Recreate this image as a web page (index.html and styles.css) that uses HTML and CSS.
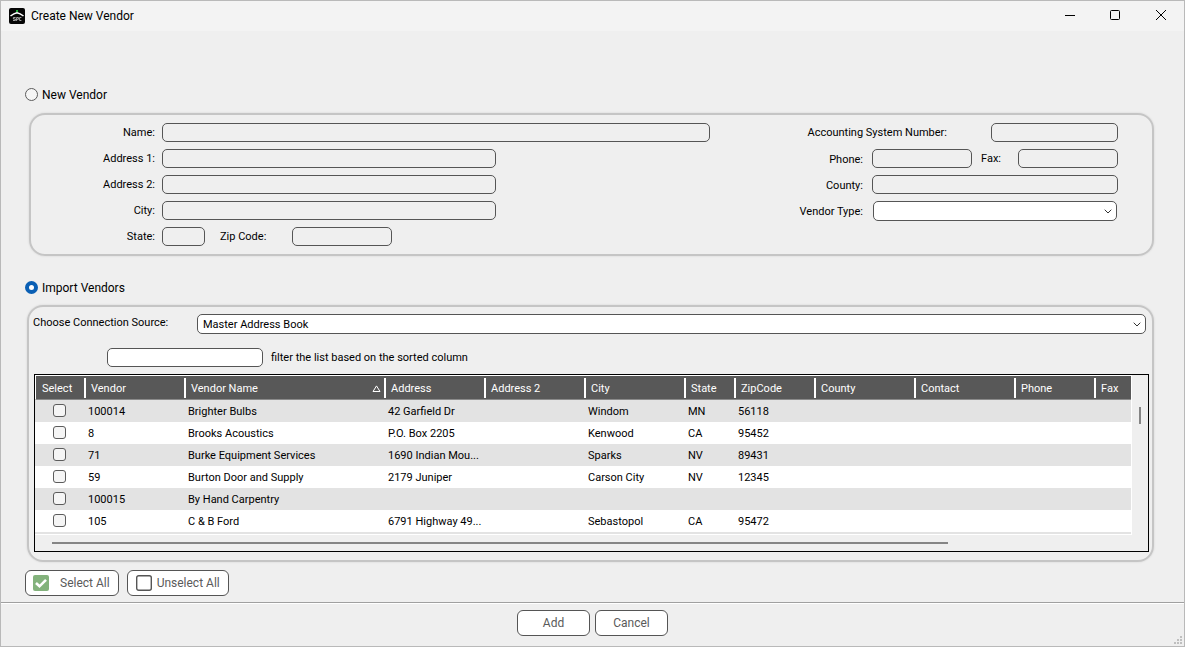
FILE: index.html
```
<!DOCTYPE html>
<html lang="en">
<head>
<meta charset="utf-8">
<title>Create New Vendor</title>
<link rel="stylesheet" href="styles.css">
</head>
<body>
<div class="window">
  <header class="titlebar">
    <svg class="app-icon" width="16" height="16" viewBox="0 0 16 16" aria-hidden="true">
      <rect width="16" height="16" rx="2" fill="#050505"/>
      <rect x="7" y="2" width="2" height="2" fill="#1fae3a"/>
      <path d="M1.5 8 Q5 5.2 8 4.7 Q11 5.2 14.5 8" fill="none" stroke="#fff" stroke-width="1.6"/>
      <path d="M6.6 9.5H4.4V11H6.4V12.5H4 M7.6 13V9.5H9.4V11.3H7.6 M12.4 9.5H10.6V12.5H12.4" fill="none" stroke="#c4c4c4" stroke-width=".8"/>
    </svg>
    <h1 class="title">Create New Vendor</h1>
    <div class="window-controls">
      <button type="button" aria-label="Minimize"><svg width="12" height="12" viewBox="0 0 12 12"><path d="M2 5.5H12" stroke="#000"/></svg></button>
      <button type="button" aria-label="Maximize"><svg width="12" height="12" viewBox="0 0 12 12"><rect x="1.5" y=".5" width="9" height="9" rx="1" fill="none" stroke="#000"/></svg></button>
      <button type="button" aria-label="Close"><svg width="12" height="12" viewBox="0 0 12 12"><path d="M1 0L11 10M11 0L1 10" stroke="#000"/></svg></button>
    </div>
  </header>

  <main class="content">
    <label class="mode"><input type="radio" name="mode">New Vendor</label>
    <section class="panel vendor-panel">
      <div class="form form-left">
        <label for="name">Name:</label><input class="field w-name" id="name" type="text" disabled>
        <label for="addr1">Address 1:</label><input class="field w-address" id="addr1" type="text" disabled>
        <label for="addr2">Address 2:</label><input class="field w-address" id="addr2" type="text" disabled>
        <label for="city">City:</label><input class="field w-address" id="city" type="text" disabled>
        <label for="state">State:</label>
        <div class="inline-fields">
          <input class="field w-state" id="state" type="text" disabled>
          <label class="zip-label" for="zip">Zip Code:</label>
          <input class="field w-short" id="zip" type="text" disabled>
        </div>
      </div>
      <div class="form-right">
        <div class="account-row">
          <label for="account">Accounting System Number:</label><input class="field w-account" id="account" type="text" disabled>
        </div>
        <div class="form">
          <label for="phone">Phone:</label>
          <div class="inline-fields spread">
            <input class="field w-short" id="phone" type="text" disabled>
            <label class="fax-label" for="fax">Fax:</label>
            <input class="field w-short" id="fax" type="text" disabled>
          </div>
          <label for="county">County:</label><input class="field" id="county" type="text" disabled>
          <label for="type">Vendor Type:</label>
          <div class="select-wrap type-select">
            <select class="field" id="type"><option></option></select>
            <svg class="chevron" width="8" height="5" viewBox="0 0 8 5"><path d="M.7 .7L4 4L7.3 .7" fill="none" stroke="#333"/></svg>
          </div>
        </div>
      </div>
    </section>

    <label class="mode mode-import"><input type="radio" name="mode" checked>Import Vendors</label>
    <section class="panel import-panel">
      <div class="source-row">
        <label for="source">Choose Connection Source:</label>
        <div class="select-wrap">
          <select class="field" id="source"><option>Master Address Book</option></select>
          <svg class="chevron" width="8" height="5" viewBox="0 0 8 5"><path d="M.7 .7L4 4L7.3 .7" fill="none" stroke="#333"/></svg>
        </div>
      </div>
      <div class="filter-row">
        <input class="field w-filter" id="filter" type="text"><label for="filter">filter the list based on the sorted column</label>
      </div>
      <div class="list">
        <div class="list-view">
          <table class="vendors">
            <colgroup><col class="c-select"><col class="c-wide"><col class="c-name"><col class="c-wide"><col class="c-wide"><col class="c-wide"><col class="c-state"><col class="c-medium"><col class="c-wide"><col class="c-wide"><col class="c-medium"><col></colgroup>
            <thead>
              <tr><th>Select</th><th>Vendor</th><th><span class="sorted">Vendor Name<svg width="9" height="8" viewBox="0 0 9 8"><path d="M4.5 .9L1 6.5H8Z" fill="none" stroke="#fff"/></svg></span></th><th>Address</th><th>Address 2</th><th>City</th><th>State</th><th>ZipCode</th><th>County</th><th>Contact</th><th>Phone</th><th>Fax</th></tr>
            </thead>
            <tbody>
              <tr><td><input type="checkbox" aria-label="Select Brighter Bulbs"></td><td>100014</td><td>Brighter Bulbs</td><td>42 Garfield Dr</td><td></td><td>Windom</td><td>MN</td><td>56118</td><td></td><td></td><td></td><td></td></tr>
              <tr><td><input type="checkbox" aria-label="Select Brooks Acoustics"></td><td>8</td><td>Brooks Acoustics</td><td>P.O. Box 2205</td><td></td><td>Kenwood</td><td>CA</td><td>95452</td><td></td><td></td><td></td><td></td></tr>
              <tr><td><input type="checkbox" aria-label="Select Burke Equipment Services"></td><td>71</td><td>Burke Equipment Services</td><td>1690 Indian Mou...</td><td></td><td>Sparks</td><td>NV</td><td>89431</td><td></td><td></td><td></td><td></td></tr>
              <tr><td><input type="checkbox" aria-label="Select Burton Door and Supply"></td><td>59</td><td>Burton Door and Supply</td><td>2179 Juniper</td><td></td><td>Carson City</td><td>NV</td><td>12345</td><td></td><td></td><td></td><td></td></tr>
              <tr><td><input type="checkbox" aria-label="Select By Hand Carpentry"></td><td>100015</td><td>By Hand Carpentry</td><td></td><td></td><td></td><td></td><td></td><td></td><td></td><td></td><td></td></tr>
              <tr><td><input type="checkbox" aria-label="Select C &amp; B Ford"></td><td>105</td><td>C &amp; B Ford</td><td>6791 Highway 49...</td><td></td><td>Sebastopol</td><td>CA</td><td>95472</td><td></td><td></td><td></td><td></td></tr>
            </tbody>
          </table>
        </div>
        <div class="scroll-y"><div class="thumb-y"></div></div>
        <div class="scroll-x"><div class="thumb-x"></div></div>
      </div>
    </section>

    <div class="selection">
      <button type="button" class="btn btn-select"><svg width="16" height="16" viewBox="0 0 16 16"><rect width="16" height="16" rx="2" fill="#83b27c"/><path d="M3 8L6.5 11.3L13 4.8" fill="none" stroke="#fff" stroke-width="2.6"/></svg>Select All</button>
      <button type="button" class="btn btn-unselect"><svg width="16" height="16" viewBox="0 0 16 16"><rect x=".7" y=".7" width="14.6" height="14.6" rx="2" fill="#fff" stroke="#555" stroke-width="1.4"/></svg>Unselect All</button>
    </div>
  </main>

  <footer class="footer">
    <button type="button" class="btn btn-action">Add</button>
    <button type="button" class="btn btn-action">Cancel</button>
    <svg class="grip" width="8" height="8" viewBox="0 0 8 8" aria-hidden="true"><path d="M6 0h2v2h-2zM3 3h2v2h-2zM6 3h2v2h-2zM0 6h2v2h-2zM3 6h2v2h-2zM6 6h2v2h-2z" fill="#bfbfbf"/></svg>
  </footer>
</div>
</body>
</html>
```
FILE: styles.css
```
* { box-sizing: border-box; }
body { margin: 0; background: #efefef; color: #000; font: 11px/16px Roboto, "Liberation Sans", sans-serif; }
input, select, button { margin: 0; font: inherit; color: inherit; }

.window { display: flex; flex-direction: column; min-height: 100vh; border: 1px solid #b9b9b9; background: #efefef; }

.titlebar { display: flex; align-items: center; height: 30px; padding-left: 8px; background: #f3f3f3; }
.title { flex: 1; margin: 0 0 0 6px; font-size: 12px; font-weight: 400; }
.window-controls { display: flex; }
.window-controls button { display: grid; place-items: center; width: 46px; height: 30px; padding: 0; border: 0; background: none; }

.content { flex: 1; padding: 54px 30px 0 24px; }
.mode { display: flex; align-items: center; gap: 4px; width: max-content; height: 20px; font-size: 12px; }
.mode input { appearance: none; width: 13px; height: 13px; margin-bottom: 2px; border: 1px solid #5c5c5c; border-radius: 50%; background: #f6f6f6; }
.mode input:checked { border: 4px solid #0a5fb4; background: #fff; }
.mode-import { margin-top: 22px; }

.panel { border: 2px solid #c5c5c5; border-radius: 16px; box-shadow: 0 0 2px #cfcfcf; }
.vendor-panel { display: flex; justify-content: space-between; margin: 8px 0 0 4px; padding: 8px 34px 8px 64px; }
.import-panel { margin: 7px 0 0 2px; padding: 7px 3px 8px 4px; }

.field { height: 19px; padding: 0 5px; border: 1px solid #555; border-radius: 5px; background: #fff; }
.field:disabled { background: #efefef; }
.form { display: grid; grid-template-columns: auto auto; grid-auto-rows: 19px; gap: 7px; align-items: center; justify-content: start; }
.form > label { text-align: right; }
.form-left { grid-template-columns: 60px auto; }
.w-name { width: 548px; }
.w-address { width: 334px; }
.w-state { width: 43px; }
.w-short { width: 100px; }
.w-account { width: 127px; }
.w-filter { width: 156px; }
.inline-fields { display: flex; align-items: center; }
.zip-label { width: 72px; margin-left: 15px; }
.form-right { display: grid; gap: 7px; align-content: start; }
.form-right .form { grid-template-columns: 65px 246px; column-gap: 9px; }
.form-right .form > label { padding-top: 2px; }
.account-row { display: flex; align-items: center; justify-content: flex-end; gap: 44px; height: 19px; }
.spread { justify-content: space-between; }
.fax-label { width: 28px; }

.select-wrap { position: relative; flex: 1; }
.select-wrap .field { display: block; appearance: none; width: 100%; height: 20px; padding-top: 1px; }
.type-select { margin: 0 1px; }
.chevron { position: absolute; right: 5px; top: 8px; }

.source-row { display: flex; align-items: center; padding-right: 3px; }
.source-row > label { width: 164px; padding-bottom: 2px; }
.filter-row { display: flex; align-items: center; gap: 8px; margin: 14px 0 7px 74px; }

.list { display: grid; grid-template-columns: 1fr 16px; margin-left: 1px; border: 1px solid #000; }
.list-view { overflow: hidden; padding-top: 1px; border-right: 1px solid #fff; border-bottom: 1px solid #fff; background: #fff; }
.vendors { width: 100%; table-layout: fixed; border-collapse: separate; border-spacing: 0; border-bottom: 2px solid #e3e3e3; }
.c-select { width: 51px; }
.c-wide { width: 100px; }
.c-name { width: 200px; }
.c-state { width: 50px; }
.c-medium { width: 80px; }
.vendors th { height: 24px; padding: 2px 5px 0; border-bottom: 1px solid #8a8a8a; background: linear-gradient(#fff, #fff) right / 2px 20px no-repeat #585858; color: #fff; font-weight: 400; text-align: left; }
.vendors th:first-child { padding-left: 6px; border-left: 1px solid #fff; }
.vendors th:last-child { background: #585858; }
.vendors td { height: 22px; padding: 2px 2px 0; white-space: nowrap; }
.vendors td:first-child { padding: 0 5px 1px 3px; }
.vendors tbody tr:nth-child(odd) { background: #e3e3e3; }
.vendors td input { display: block; appearance: none; width: 13px; height: 13px; margin: 0 auto; border: 1px solid #5c5c5c; border-radius: 3px; background: #f5f5f5; }
.sorted { display: flex; align-items: center; justify-content: space-between; }
.scroll-y { padding: 32px 7px 0; }
.thumb-y { width: 2px; height: 17px; background: #858585; }
.scroll-x { padding: 7px 0 7px 17px; }
.thumb-x { width: 83%; height: 2px; background: #858585; }

.selection { display: flex; gap: 8px; margin: 8px 0 6px; }
.btn { display: flex; align-items: center; height: 26px; padding: 0 8px; border: 1px solid #555; border-radius: 6px; background: #fff; color: #5a5a5a; font-size: 12px; }
.btn-select { gap: 11px; padding-left: 7px; }
.btn-unselect { gap: 5px; }
.btn-action { justify-content: center; width: 73px; }

.footer { position: relative; display: flex; justify-content: center; gap: 5px; padding: 7px 0 10px; border-top: 1px solid #a0a0a0; box-shadow: inset 0 1px #fff; }
.grip { position: absolute; right: 2px; bottom: 2px; }
```
